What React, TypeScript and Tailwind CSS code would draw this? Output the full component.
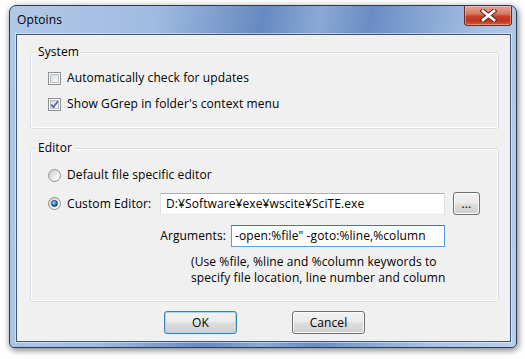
import React from 'react';

const CheckBox = ({ checked }: { checked?: boolean }) => (
  <span className="relative w-[13px] h-[13px] shrink-0 border border-[#8e8f8f] bg-white flex items-center justify-center">
    <span className="w-[9px] h-[9px] border border-[#b9bdc2] bg-[linear-gradient(135deg,#d9dbde_0%,#eceef0_55%,#fafafa_100%)]" />
    {checked && (
      <svg className="absolute inset-0" width="11" height="11" viewBox="0 0 11 11">
        <path d="M2.2 5.6 L4.4 8.2 L8.8 2.2" fill="none" stroke="#4a5d92" strokeWidth="1.6" strokeLinejoin="round" />
      </svg>
    )}
  </span>
);

const Radio = ({ checked }: { checked?: boolean }) => (
  <span className="w-[13px] h-[13px] shrink-0 rounded-full border border-[#8c8e91] bg-[linear-gradient(135deg,#c9cbce_0%,#eef0f2_60%,#ffffff_100%)] flex items-center justify-center">
    {checked && (
      <span className="w-[7px] h-[7px] rounded-full border border-[#1a3f6b] bg-[radial-gradient(circle_at_35%_30%,#bfe6ff_0%,#3d86c6_45%,#0d2f5c_100%)]" />
    )}
  </span>
);

const Button = ({ label, primary, w = 'w-[73px]' }: { label: string; primary?: boolean; w?: string }) => (
  <button
    className={
      w +
      ' h-[23px] rounded-[3px] border text-[12px] leading-none text-black flex items-center justify-center bg-[linear-gradient(#f2f2f2_0%,#ebebeb_48%,#dddddd_52%,#cfcfcf_100%)] ' +
      (primary
        ? 'border-[#3c7fb1] shadow-[inset_0_0_0_1px_#a7d8f3]'
        : 'border-[#707070] shadow-[inset_0_0_0_1px_#fbfbfb]')
    }
  >
    {label}
  </button>
);

export default function App() {
  return (
    <div className="w-[525px] h-[359px] bg-white overflow-hidden font-['Open_Sans',sans-serif] text-[12px] text-black tracking-[0.1px]">
      <div className="ml-[9px] mt-[5px] w-[508px] h-[343px] rounded-t-[7px] rounded-b-[5px] border border-[#2b3c5a] shadow-[1px_2px_7px_rgba(0,0,0,0.55)] bg-[linear-gradient(100deg,#b2c8e7_0%,#a0bbe1_26%,#6689c0_45%,#8aa9d6_55%,#6a8cc4_64%,#7e9fd0_71%,#a9c2e5_85%,#b9ceeb_100%)] flex flex-col">
        <div className="h-[28px] flex justify-between pl-[7px] pr-[4px] shrink-0">
          <span className="pt-[6px] leading-[16px] text-[12px]">Optoins</span>
          <div className="w-[48px] h-[20px] rounded-b-[4px] border border-t-0 border-[#6b2a22] bg-[linear-gradient(#e7a392_0%,#d97c66_40%,#c63f26_55%,#c1361c_80%,#d2603f_100%)] shadow-[inset_0_0_0_1px_rgba(255,210,200,0.45)] flex items-center justify-center">
            <svg width="17" height="13" viewBox="0 0 17 13">
              <path d="M3 2 L14 11 M14 2 L3 11" stroke="#4e1d15" strokeWidth="4.6" strokeLinecap="square" />
              <path d="M3 2 L14 11 M14 2 L3 11" stroke="#ffffff" strokeWidth="2.8" strokeLinecap="square" />
            </svg>
          </div>
        </div>
        <div className="mx-[5px] ml-[6px] mb-[5px] flex-1 border border-[#3f5577] shadow-[0_0_0_1px_rgba(255,255,255,0.45)] bg-[#f0f0f0] pl-[13px] pr-[11px] pt-[17px]">
          <div className="h-[77px] rounded-[3px] border border-[#d5dfe5] shadow-[inset_0_0_0_1px_#ffffff]">
            <span className="block w-fit -mt-[9px] ml-[5px] px-[2px] bg-[#f0f0f0] leading-[16px]">System</span>
            <div className="mt-[10px] pl-[17px] h-[16px] flex items-center gap-[6px]">
              <CheckBox />
              <span>Automatically check for updates</span>
            </div>
            <div className="mt-[10px] pl-[17px] h-[16px] flex items-center gap-[6px]">
              <CheckBox checked />
              <span>Show GGrep in folder's context menu</span>
            </div>
          </div>

          <div className="mt-[19px] h-[154px] rounded-[3px] border border-[#d5dfe5] shadow-[inset_0_0_0_1px_#ffffff]">
            <span className="block w-fit -mt-[9px] ml-[5px] px-[2px] bg-[#f0f0f0] leading-[16px]">Editor</span>
            <div className="mt-[11px] pl-[17px] h-[16px] flex items-center gap-[6px]">
              <Radio />
              <span>Default file specific editor</span>
            </div>
            <div className="mt-[9px] pl-[17px] h-[23px] flex items-center">
              <Radio checked />
              <span className="ml-[6px] w-[93px]">Custom Editor:</span>
              <div className="w-[285px] h-[22px] bg-white border border-[#abadb3] border-l-[#dbdfe6] border-r-[#dbdfe6] border-b-[#e3e9ef] pl-[5px] flex items-center whitespace-nowrap overflow-hidden">
                D:¥Software¥exe¥wscite¥SciTE.exe
              </div>
              <div className="ml-[8px]">
                <Button label="..." w="w-[27px]" />
              </div>
            </div>
            <div className="mt-[10px] h-[22px] flex items-center">
              <span className="w-[196px] text-right pr-[1px]">Arguments:</span>
              <div className="ml-[4px] w-[214px] h-[22px] bg-white border border-[#569de5] border-t-[#3d7bad] pl-[3px] flex items-center whitespace-nowrap overflow-hidden">
                -open:%file" -goto:%line,%column
              </div>
            </div>
            <div className="mt-[7px] pl-[160px] leading-[16px]">
              <div>(Use %file, %line and %column keywords to</div>
              <div>specify file location, line number and column</div>
            </div>
          </div>

          <div className="mt-[9px] flex justify-center gap-[55px]">
            <Button label="OK" primary />
            <Button label="Cancel" />
          </div>
        </div>
      </div>
    </div>
  );
}
